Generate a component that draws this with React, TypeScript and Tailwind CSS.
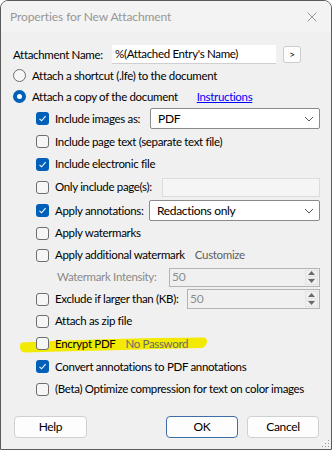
import React from "react";

const FONT = "font-['Segoe_UI','Lato',sans-serif]";

function Check({ checked }: { checked?: boolean }) {
  return checked ? (
    <div className="w-[13px] h-[13px] shrink-0 rounded-[3px] bg-[#005fb8] flex items-center justify-center">
      <svg width="9" height="9" viewBox="0 0 9 9">
        <path d="M1.5 4.8 L3.6 6.8 L7.6 2.2" fill="none" stroke="#fff" strokeWidth="1.1" />
      </svg>
    </div>
  ) : (
    <div className="w-[13px] h-[13px] shrink-0 rounded-[3px] border border-[#6e6e6e] bg-[#f6f6f6]" />
  );
}

function Radio({ checked }: { checked?: boolean }) {
  return checked ? (
    <div className="w-[13px] h-[13px] shrink-0 rounded-full bg-[#005fb8] flex items-center justify-center">
      <div className="w-[5px] h-[5px] rounded-full bg-white" />
    </div>
  ) : (
    <div className="w-[13px] h-[13px] shrink-0 rounded-full border border-[#6e6e6e] bg-[#f6f6f6]" />
  );
}

function Chevron() {
  return (
    <svg width="10" height="6" viewBox="0 0 10 6" className="absolute right-[5px] top-1/2 -translate-y-1/2">
      <path d="M1 1 L5 5 L9 1" fill="none" stroke="#555" strokeWidth="1" />
    </svg>
  );
}

function Spinner() {
  return (
    <div className="absolute right-0 top-0 bottom-0 w-[15px] flex flex-col gap-[1px] p-[1px]">
      <div className="flex-1 bg-[#f0f0f0] border border-[#e3e3e3] flex items-center justify-center">
        <svg width="7" height="4" viewBox="0 0 7 4"><path d="M0 4 L3.5 0 L7 4 Z" fill="#6a6a6a" /></svg>
      </div>
      <div className="flex-1 bg-[#f0f0f0] border border-[#e3e3e3] flex items-center justify-center">
        <svg width="7" height="4" viewBox="0 0 7 4"><path d="M0 0 L3.5 4 L7 0 Z" fill="#6a6a6a" /></svg>
      </div>
    </div>
  );
}

function CheckRow({ h, checked, children, right }: { h: string; checked?: boolean; children: React.ReactNode; right?: React.ReactNode }) {
  return (
    <div className={`flex items-center pl-[35px] ${h}`}>
      <Check checked={checked} />
      <div className="ml-[6px] flex items-center whitespace-nowrap">{children}</div>
      {right}
    </div>
  );
}

export default function App() {
  return (
    <div className={`${FONT} text-[11.5px] tracking-[-0.33px] text-black w-[332px] h-[450px] relative overflow-hidden rounded-t-[8px] border border-[#5a5a5a] bg-[#f0f0f0]`}>
      {/* Title bar */}
      <div className="h-[31px] bg-[#f3f3f3] flex items-center pl-[9px] pr-[9px] text-[#969696]">
        <span className="text-[12px] tracking-[-0.1px]">Properties for New Attachment</span>
        <svg width="10" height="10" viewBox="0 0 10 10" className="ml-auto mr-[5px]">
          <path d="M0.5 0.5 L9.5 9.5 M9.5 0.5 L0.5 9.5" stroke="#9a9a9a" strokeWidth="1" />
        </svg>
      </div>

      {/* highlight */}
      <svg className="absolute left-0 top-0 pointer-events-none" width="332" height="450" viewBox="0 0 332 450">
        <path d="M21 341.5 Q110 337 203 336.5 Q206 337 206 341 Q205 346.5 200 347 Q110 349 24 351.5 Q19 351 19 346 Q19 342 21 341.5 Z" fill="#f2ea00" />
      </svg>

      <div className="relative pl-[12px] pr-[11px]">
        {/* Attachment name */}
        <div className="flex items-center h-[21px] mt-[12px]">
          <span className="w-[99px] shrink-0 whitespace-nowrap">Attachment Name:</span>
          <div className="w-[164px] shrink-0 h-[19px] bg-white border-b border-[#cfcfcf] flex items-center pl-[3px] whitespace-nowrap">%(Attached Entry's Name)</div>
          <div className="ml-[7px] shrink-0 w-[18px] h-[17px] bg-[#fdfdfd] border border-[#cccccc] rounded-[3px] flex items-center justify-center text-[10px]">&gt;</div>
        </div>

        <div className="flex items-center h-[21px]">
          <Radio />
          <span className="ml-[6px] whitespace-nowrap">Attach a shortcut (.lfe) to the document</span>
        </div>
        <div className="flex items-center h-[21px]">
          <Radio checked />
          <span className="ml-[6px] whitespace-nowrap">Attach a copy of the document</span>
          <span className="ml-[19px] text-[#0000ff] underline whitespace-nowrap">Instructions</span>
        </div>
      </div>

      <div className="relative pr-[11px]">
        <CheckRow h="h-[23px]" checked right={
          <div className="ml-auto shrink-0 relative w-[170px] h-[21px] bg-white border border-[#8a8a8a] rounded-[2px] flex items-center pl-[7px] text-[12px]">PDF<Chevron /></div>
        }>Include images as:</CheckRow>
        <CheckRow h="h-[23px]">Include page text (separate text file)</CheckRow>
        <CheckRow h="h-[22px]" checked>Include electronic file</CheckRow>
        <CheckRow h="h-[24px]" right={
          <div className="ml-auto shrink-0 w-[158px] h-[19px] bg-[#f5f5f5] border border-[#dcdcdc]" />
        }>Only include page(s):</CheckRow>
        <CheckRow h="h-[23px]" checked right={
          <div className="ml-auto shrink-0 relative w-[171px] h-[21px] bg-white border border-[#8a8a8a] rounded-[2px] flex items-center pl-[7px] text-[12px]">Redactions only<Chevron /></div>
        }>Apply annotations:</CheckRow>
        <CheckRow h="h-[22px]">Apply watermarks</CheckRow>
        <CheckRow h="h-[22px]">
          Apply additional watermark<span className="ml-[10px] text-[#5e5e5e]">Customize</span>
        </CheckRow>
        <div className="flex items-center h-[22px] pl-[56px]">
          <span className="text-[#8a8a8a] whitespace-nowrap">Watermark Intensity:</span>
          <div className="ml-auto shrink-0 relative w-[151px] h-[19px] border border-[#b4b4b4] bg-[#f0f0f0] flex items-center pl-[2px] text-[#8e8e8e] text-[12px]">50<Spinner /></div>
        </div>
        <CheckRow h="h-[22px]" right={
          <div className="ml-auto shrink-0 relative w-[133px] h-[20px] border border-[#b4b4b4] bg-[#f0f0f0] flex items-center pl-[2px] text-[#8e8e8e] text-[12px]">50<Spinner /></div>
        }>Exclude if larger than (KB):</CheckRow>
        <CheckRow h="h-[22px]">Attach as zip file</CheckRow>
        <CheckRow h="h-[23px]">
          Encrypt PDF<span className="ml-[10px] text-[#6a6a6a]">No Password</span>
        </CheckRow>
        <CheckRow h="h-[23px]" checked>Convert annotations to PDF annotations</CheckRow>
        <CheckRow h="h-[22px]">(Beta) Optimize compression for text on color images</CheckRow>
      </div>

      {/* Buttons */}
      <div className="flex items-center mt-[16px] pl-[13px] pr-[12px]">
        <div className="w-[73px] h-[22px] bg-[#fdfdfd] border border-[#d0d0d0] rounded-[4px] flex items-center justify-center text-[12px]">Help</div>
        <div className="ml-auto w-[72px] h-[22px] bg-[#fdfdfd] border border-[#3d6fa6] rounded-[4px] flex items-center justify-center text-[12px]">OK</div>
        <div className="ml-[9px] w-[72px] h-[22px] bg-[#fdfdfd] border border-[#d0d0d0] rounded-[4px] flex items-center justify-center text-[12px]">Cancel</div>
      </div>

      {/* grip */}
      <svg className="absolute right-[1px] bottom-[1px]" width="8" height="8" viewBox="0 0 8 8">
        <rect x="6" y="0" width="1" height="1" fill="#999" />
        <rect x="3" y="3" width="1" height="1" fill="#999" />
        <rect x="6" y="3" width="1" height="1" fill="#999" />
        <rect x="0" y="6" width="1" height="1" fill="#999" />
        <rect x="3" y="6" width="1" height="1" fill="#999" />
        <rect x="6" y="6" width="1" height="1" fill="#999" />
      </svg>
    </div>
  );
}
